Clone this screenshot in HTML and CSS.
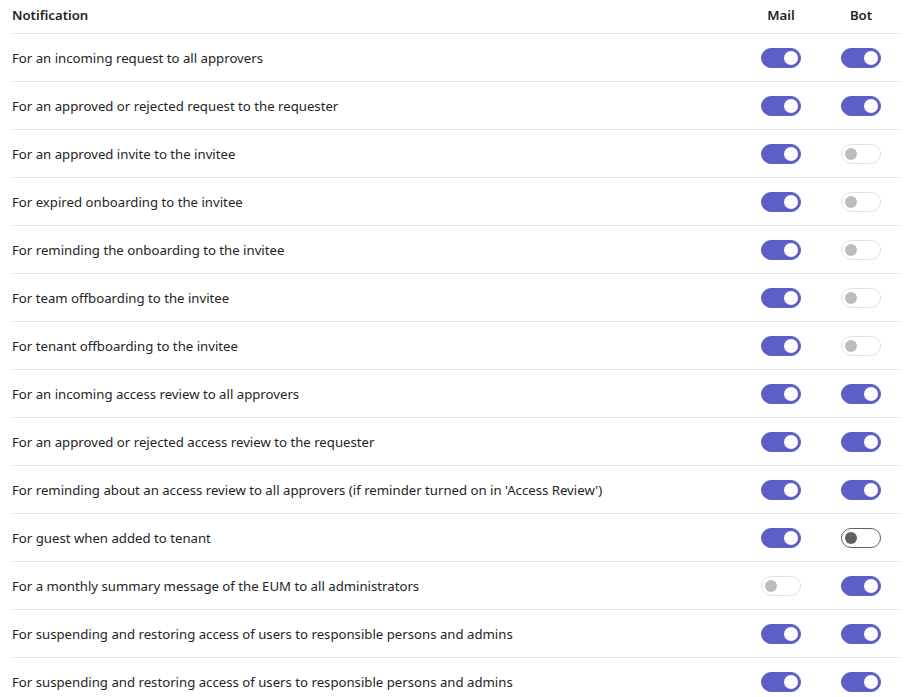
FILE: index.html
```html
<!DOCTYPE html>
<html>
<head>
    <title>Notification settings</title>
    <link rel="stylesheet" href="styles.css">
</head>
<body>
    <div class="settings">
        <div class="row head">
            <div class="label">Notification</div>
            <div class="col">Mail</div>
            <div class="col">Bot</div>
        </div>
        <div class="row">
            <div class="label">For an incoming request to all approvers</div>
            <div class="col"><span class="toggle on"></span></div>
            <div class="col"><span class="toggle on"></span></div>
        </div>
        <div class="row">
            <div class="label">For an approved or rejected request to the requester</div>
            <div class="col"><span class="toggle on"></span></div>
            <div class="col"><span class="toggle on"></span></div>
        </div>
        <div class="row">
            <div class="label">For an approved invite to the invitee</div>
            <div class="col"><span class="toggle on"></span></div>
            <div class="col"><span class="toggle disabled"></span></div>
        </div>
        <div class="row">
            <div class="label">For expired onboarding to the invitee</div>
            <div class="col"><span class="toggle on"></span></div>
            <div class="col"><span class="toggle disabled"></span></div>
        </div>
        <div class="row">
            <div class="label">For reminding the onboarding to the invitee</div>
            <div class="col"><span class="toggle on"></span></div>
            <div class="col"><span class="toggle disabled"></span></div>
        </div>
        <div class="row">
            <div class="label">For team offboarding to the invitee</div>
            <div class="col"><span class="toggle on"></span></div>
            <div class="col"><span class="toggle disabled"></span></div>
        </div>
        <div class="row">
            <div class="label">For tenant offboarding to the invitee</div>
            <div class="col"><span class="toggle on"></span></div>
            <div class="col"><span class="toggle disabled"></span></div>
        </div>
        <div class="row">
            <div class="label">For an incoming access review to all approvers</div>
            <div class="col"><span class="toggle on"></span></div>
            <div class="col"><span class="toggle on"></span></div>
        </div>
        <div class="row">
            <div class="label">For an approved or rejected access review to the requester</div>
            <div class="col"><span class="toggle on"></span></div>
            <div class="col"><span class="toggle on"></span></div>
        </div>
        <div class="row">
            <div class="label">For reminding about an access review to all approvers (if reminder turned on in 'Access Review')</div>
            <div class="col"><span class="toggle on"></span></div>
            <div class="col"><span class="toggle on"></span></div>
        </div>
        <div class="row">
            <div class="label">For guest when added to tenant</div>
            <div class="col"><span class="toggle on"></span></div>
            <div class="col"><span class="toggle"></span></div>
        </div>
        <div class="row">
            <div class="label">For a monthly summary message of the EUM to all administrators</div>
            <div class="col"><span class="toggle disabled"></span></div>
            <div class="col"><span class="toggle on"></span></div>
        </div>
        <div class="row">
            <div class="label">For suspending and restoring access of users to responsible persons and admins</div>
            <div class="col"><span class="toggle on"></span></div>
            <div class="col"><span class="toggle on"></span></div>
        </div>
        <div class="row">
            <div class="label">For suspending and restoring access of users to responsible persons and admins</div>
            <div class="col"><span class="toggle on"></span></div>
            <div class="col"><span class="toggle on"></span></div>
        </div>
    </div>
</body>
</html>
```

FILE: styles.css
```css
body {
    font-family: 'Segoe UI', 'Noto Sans', sans-serif;
    font-size: 13.2px;
    color: #242424;
    margin: 0;
    background: #fff;
}
.settings {
    margin-left: 12px;
    width: 888px;
}
.row {
    display: grid;
    grid-template-columns: 1fr 80px 80px;
    align-items: center;
    height: 47px;
    border-bottom: 1px solid #e6e6e6;
}
.row.head {
    height: 30px;
    padding-bottom: 3px;
    font-weight: 600;
}
.col {
    display: flex;
    justify-content: center;
    padding-left: 2px;
}
.toggle {
    position: relative;
    box-sizing: border-box;
    width: 40px;
    height: 20px;
    border-radius: 10px;
    border: 1px solid #616161;
    background: #fff;
}
.toggle::after {
    content: '';
    position: absolute;
    top: 3px;
    left: 3px;
    width: 12px;
    height: 12px;
    border-radius: 50%;
    background: #616161;
}
.toggle.on {
    background: #5b5fc7;
    border-color: #5b5fc7;
}
.toggle.on::after {
    left: auto;
    right: 2px;
    top: 2px;
    width: 14px;
    height: 14px;
    background: #fff;
}
.toggle.disabled {
    border-color: #e0e0e0;
}
.toggle.disabled::after {
    background: #bdbdbd;
}
```
